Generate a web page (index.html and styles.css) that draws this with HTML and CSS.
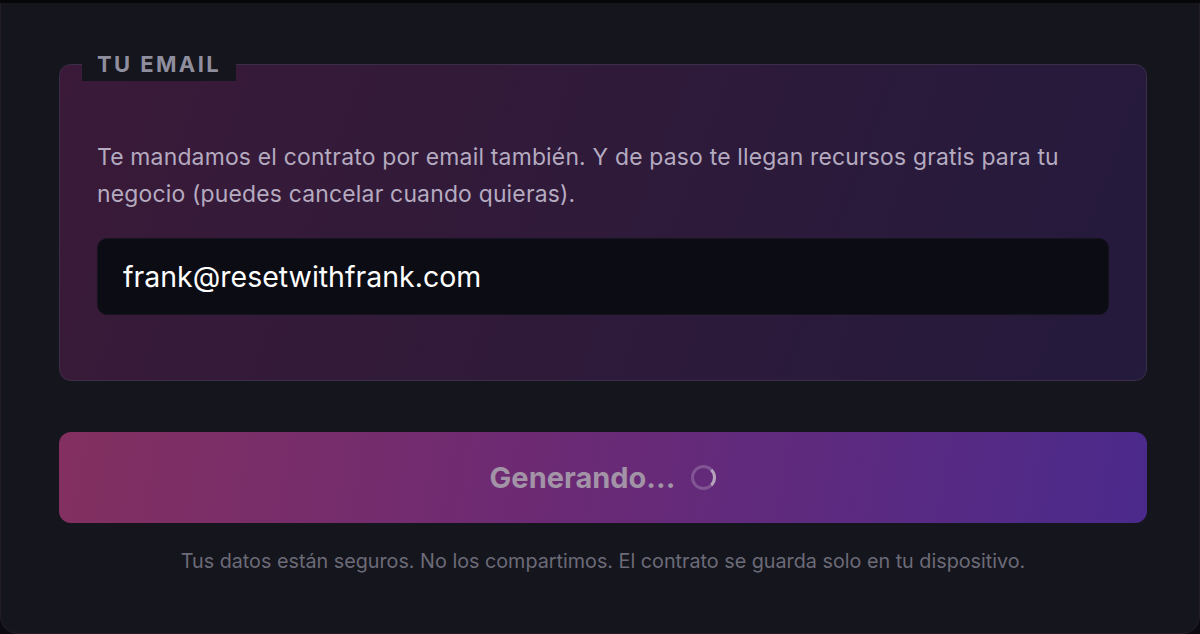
FILE: index.html
```html
<!DOCTYPE html>
<html>

<head>
    <meta charset="utf-8">
    <link rel="stylesheet" href="styles.css">
</head>

<body>
    <div class="top_strip"></div>
    <div class="card">
        <fieldset class="email_box">
            <legend class="email_label">TU EMAIL</legend>
            <p class="email_text">Te mandamos el contrato por email también. Y de paso te llegan recursos gratis para tu negocio (puedes cancelar cuando quieras).</p>
            <input class="email_input" type="email" value="frank@resetwithfrank.com">
        </fieldset>
        <button class="generate" disabled>
            Generando...
            <span class="spinner"></span>
        </button>
        <p class="safe_note">Tus datos están seguros. No los compartimos. El contrato se guarda solo en tu dispositivo.</p>
    </div>
</body>

</html>
```

FILE: styles.css
```css
body {
    margin: 0;
    background: #0b0a10;
    font-family: Inter, "Noto Sans", sans-serif;
    height: 634px;
    overflow: hidden
}

.top_strip {
    height: 3px;
    background: #07070a
}

.card {
    height: 631px;
    box-sizing: border-box;
    background: #15151d;
    border: 1px solid #221c2a;
    border-top: none;
    border-radius: 0 0 18px 18px;
    padding: 44px 52px 0 58px
}

.email_box {
    margin: 0;
    padding: 58px 37px 65px 37px;
    border: 1px solid #3a2e48;
    border-radius: 12px;
    background: linear-gradient(110deg, #3a1a38 0%, #2f1a3a 50%, #241a3c 100%)
}

.email_label {
    margin-left: -15px;
    padding: 0 15px;
    background: #15151d;
    color: #8f8e9e;
    font-size: 22px;
    font-weight: 700;
    letter-spacing: 2.4px;
    line-height: 34px
}

.email_text {
    margin: 0;
    color: #b5abc0;
    font-size: 22.9px;
    line-height: 37px;
    letter-spacing: 0.2px
}

.email_input {
    display: block;
    width: 100%;
    box-sizing: border-box;
    height: 77px;
    margin-top: 25px;
    padding: 0 25px;
    border: 1px solid #16141e;
    border-radius: 10px;
    background: #0c0c14;
    color: #ffffff;
    font-family: Inter, "Noto Sans", sans-serif;
    font-size: 28.5px;
    outline: none
}

.generate {
    display: flex;
    align-items: center;
    justify-content: center;
    gap: 16px;
    width: 100%;
    height: 91px;
    margin-top: 51px;
    border: none;
    border-radius: 12px;
    background: linear-gradient(100deg, #833060 0%, #6c2a74 45%, #4b2a8c 100%);
    color: #a293a7;
    font-family: Inter, "Noto Sans", sans-serif;
    font-size: 29px;
    font-weight: 700
}

.spinner {
    width: 19px;
    height: 19px;
    border: 3px solid rgba(200, 185, 210, 0.3);
    border-right-color: #b5a6bb;
    border-radius: 50%
}

.safe_note {
    margin: 24px 0 0 0;
    text-align: center;
    color: #6c6b78;
    font-size: 19.75px;
    line-height: 28px
}
```
